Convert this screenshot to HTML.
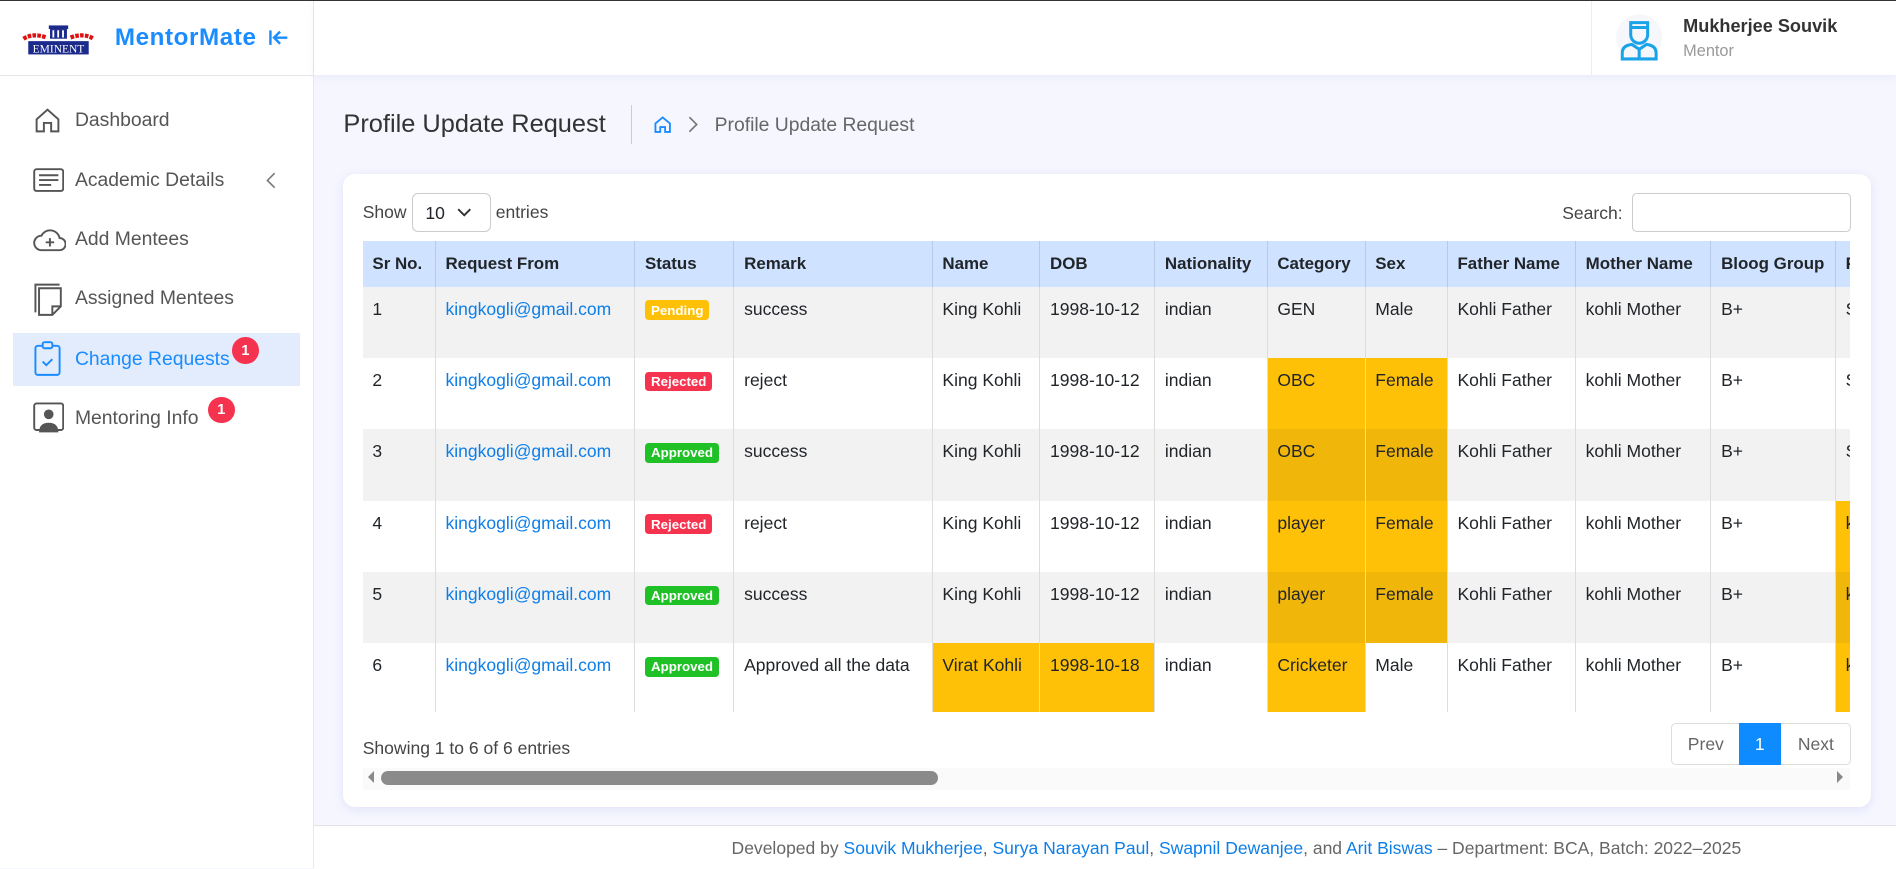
<!DOCTYPE html>
<html><head><meta charset="utf-8"><style>
html,body{margin:0;padding:0}
body{width:1568px;height:718px;zoom:1.20918;overflow:hidden;font-family:"Liberation Sans",sans-serif;background:#f5f6fe;position:relative;color:#212529}
.abs{position:absolute}
#top{left:0;top:0;width:1568px;height:1px;background:#333}
#side{left:0;top:1px;width:259px;height:717px;background:#fff;border-right:1px solid #e8e8f4}
#hdr{left:260px;top:1px;width:1308px;height:61px;background:#fff;box-shadow:0 2px 6px rgba(100,100,200,.08)}
.nav{position:absolute;left:11px;width:237px;height:44px;font-size:16px;color:#555;display:flex;align-items:center}
.nav svg{position:absolute;left:16px}
.nav span{position:absolute;left:51px}
.badge{position:absolute;background:#f5334f;color:#fff;font-size:12px;font-weight:bold;border-radius:50%;width:22px;height:22px;display:flex;align-items:center;justify-content:center}
#card{left:284px;top:144px;width:1263px;height:523px;background:#fff;border-radius:10px;box-shadow:0 2px 8px rgba(120,120,220,.15)}
#tw{left:300px;top:199px;width:1230px;height:390px;overflow:hidden}
table{border-collapse:collapse;table-layout:fixed;width:1338px;font-size:14.5px}
th{background:#cfe2ff;text-align:left;font-weight:bold;height:38px;padding:0 8px;border-right:1px solid #b8cbe6;font-size:14px;white-space:nowrap;overflow:hidden}
td{height:59px;padding:10px 8px 0;vertical-align:top;border-right:1px solid #ddd;white-space:nowrap;overflow:hidden;box-sizing:border-box;color:#212529}
tr.g td{background:#f2f2f2}
td.y{background:#ffc107!important}
tr.g td.y{background:#f0b70a!important}
a{color:#0d7ee8;text-decoration:none}
.st{display:inline-block;color:#fff;font-size:11px;font-weight:bold;padding:2px 5px;border-radius:3px;margin-top:1px}
.p{background:#ffc107}.r{background:#f5334f}.ap{background:#1fc126}
</style></head><body>
<div id="top" class="abs"></div>
<div id="side" class="abs">
 <svg class="abs" style="left:17px;top:18px" width="62" height="30" viewBox="0 0 62 30">
  <rect x="23" y="2" width="16" height="3" fill="#1c2a8c"/><rect x="24" y="5" width="14" height="8" fill="#1c2a8c"/>
  <rect x="26" y="6" width="1.5" height="6" fill="#fff"/><rect x="30" y="6" width="1.5" height="6" fill="#fff"/><rect x="34" y="6" width="1.5" height="6" fill="#fff"/>
  <path d="M2 13 Q10 8 21 12 M41 12 Q52 8 60 13" stroke="#d11" stroke-width="3.5" fill="none" stroke-dasharray="3 1"/>
  <rect x="6" y="15" width="50" height="11" fill="#1c2a8c"/>
  <text x="31" y="24.5" font-size="9.5" fill="#fff" text-anchor="middle" font-family="Liberation Serif">EMINENT</text>
 </svg>
 <div class="abs" style="left:95px;top:19px;font-size:20px;font-weight:bold;color:#1a8cff;letter-spacing:.5px">MentorMate</div>
 <svg class="abs" style="left:222px;top:22px" width="18" height="16" viewBox="0 0 18 16"><path d="M2 2v12M16 8H6M10 3L5 8l5 5" stroke="#1a8cff" stroke-width="2" fill="none"/></svg>
 <div class="abs" style="left:0;top:61px;width:259px;height:1px;background:#e5e5e5"></div>
 <div class="nav" style="top:77px"><svg width="24" height="24" viewBox="0 0 24 24"><path d="M3 11L12 3l9 8v10h-6v-7h-6v7H3z" stroke="#555" stroke-width="1.6" fill="none"/></svg><span>Dashboard</span></div>
 <div class="nav" style="top:126px"><svg width="26" height="20" viewBox="0 0 26 20"><rect x="1" y="1" width="24" height="18" rx="2" stroke="#555" stroke-width="1.6" fill="none"/><path d="M5 6h16M5 10h16M5 14h10" stroke="#555" stroke-width="1.6"/></svg><span>Academic Details</span><svg style="left:208px" width="10" height="14" viewBox="0 0 10 14"><path d="M8 1L2 7l6 6" stroke="#777" fill="none" stroke-width="1.3"/></svg></div>
 <div class="nav" style="top:175px"><svg width="28" height="22" viewBox="0 0 28 22"><path d="M7 20a6 6 0 0 1 0-12 8 8 0 0 1 15 2 5 5 0 0 1 0 10z" stroke="#555" stroke-width="1.6" fill="none"/><path d="M14 10v7M10.5 13.5h7" stroke="#555" stroke-width="1.6"/></svg><span>Add Mentees</span></div>
 <div class="nav" style="top:224px"><svg width="26" height="30" viewBox="0 0 26 30"><path d="M2 26V3h20" stroke="#555" stroke-width="1.6" fill="none"/><path d="M5 28V6h18v15l-7 7z M16 28v-7h7" stroke="#555" stroke-width="1.6" fill="none"/></svg><span>Assigned Mentees</span></div>
 <div class="nav" style="top:274px;background:#e2ecfd;color:#1a8cff"><svg width="24" height="30" viewBox="0 0 24 30"><rect x="2" y="4" width="20" height="24" rx="2" stroke="#1a8cff" stroke-width="1.6" fill="none"/><rect x="8" y="1" width="8" height="5" rx="1.5" stroke="#1a8cff" stroke-width="1.6" fill="#e2ecfd"/><path d="M8 17l3 3 5-5" stroke="#1a8cff" stroke-width="1.6" fill="none"/></svg><span>Change Requests</span></div>
 <div class="badge" style="left:192px;top:278px">1</div>
 <div class="nav" style="top:323px"><svg width="26" height="28" viewBox="0 0 26 28"><rect x="1" y="2" width="24" height="22" rx="2" stroke="#555" stroke-width="1.6" fill="none"/><circle cx="13" cy="11" r="4" fill="#555"/><path d="M5 26q0-8 8-8t8 8z" fill="#555"/></svg><span>Mentoring Info</span></div>
 <div class="badge" style="left:172px;top:327px">1</div>
</div>
<div id="hdr" class="abs">
 <div class="abs" style="left:1056px;top:0;width:1px;height:61px;background:#eee"></div>
 <svg class="abs" style="left:1076px;top:10px" width="40" height="42" viewBox="0 0 40 42"><circle cx="20" cy="20" r="19" fill="#f6f7fb"/><path d="M13 8h14v10a7 7 0 0 1-14 0z M13 12h14" stroke="#1aa3e8" stroke-width="2.5" fill="none"/><path d="M6 38v-5q0-6 8-7l6 4 6-4q8 1 8 7v5z M20 30v8" stroke="#1aa3e8" stroke-width="2.5" fill="none"/></svg>
 <div class="abs" style="left:1132px;top:12px;font-size:15px;font-weight:bold;color:#333">Mukherjee Souvik</div>
 <div class="abs" style="left:1132px;top:34px;font-size:13.5px;color:#999">Mentor</div>
</div>
<div class="abs" style="left:284px;top:91px;font-size:21px;color:#333">Profile Update Request</div>
<div class="abs" style="left:522px;top:87px;width:1px;height:32px;background:#ccc"></div>
<svg class="abs" style="left:540px;top:95px" width="16" height="16" viewBox="0 0 16 16"><path d="M2 7l6-5 6 5v7H10v-4H6v4H2z" stroke="#1a8cff" stroke-width="1.5" fill="none"/></svg>
<svg class="abs" style="left:568px;top:96px" width="10" height="14" viewBox="0 0 10 14"><path d="M2 1l6 6-6 6" stroke="#777" stroke-width="1.4" fill="none"/></svg>
<div class="abs" style="left:591px;top:94px;font-size:16px;color:#666">Profile Update Request</div>
<div id="card" class="abs"></div>
<div class="abs" style="left:300px;top:167px;font-size:14.5px;color:#444">Show</div>
<div class="abs" style="left:341px;top:160px;width:63px;height:30px;border:1px solid #ccc;border-radius:5px;background:#fff"><span class="abs" style="left:10px;top:7px;font-size:14.5px">10</span><svg class="abs" style="left:36px;top:11px" width="12" height="8" viewBox="0 0 12 8"><path d="M1 1l5 5 5-5" stroke="#333" stroke-width="1.6" fill="none"/></svg></div>
<div class="abs" style="left:410px;top:167px;font-size:14.5px;color:#444">entries</div>
<div class="abs" style="left:1292px;top:168px;font-size:14.5px;color:#444">Search:</div>
<div class="abs" style="left:1350px;top:160px;width:179px;height:30px;border:1px solid #ccc;border-radius:4px;background:#fff"></div>
<div id="tw" class="abs"><table>
<colgroup><col style="width:60px"><col style="width:165px"><col style="width:82px"><col style="width:164px"><col style="width:89px"><col style="width:95px"><col style="width:93px"><col style="width:81px"><col style="width:68px"><col style="width:106px"><col style="width:112px"><col style="width:103px"><col style="width:120px"></colgroup>
<tr><th>Sr No.</th><th>Request From</th><th>Status</th><th>Remark</th><th>Name</th><th>DOB</th><th>Nationality</th><th>Category</th><th>Sex</th><th>Father Name</th><th>Mother Name</th><th>Bloog Group</th><th>Phone</th></tr>
<tr class="g"><td>1</td><td><a>kingkogli@gmail.com</a></td><td><span class="st p">Pending</span></td><td>success</td><td>King Kohli</td><td>1998-10-12</td><td>indian</td><td>GEN</td><td>Male</td><td>Kohli Father</td><td>kohli Mother</td><td>B+</td><td>S</td></tr>
<tr><td>2</td><td><a>kingkogli@gmail.com</a></td><td><span class="st r">Rejected</span></td><td>reject</td><td>King Kohli</td><td>1998-10-12</td><td>indian</td><td class="y">OBC</td><td class="y">Female</td><td>Kohli Father</td><td>kohli Mother</td><td>B+</td><td>S</td></tr>
<tr class="g"><td>3</td><td><a>kingkogli@gmail.com</a></td><td><span class="st ap">Approved</span></td><td>success</td><td>King Kohli</td><td>1998-10-12</td><td>indian</td><td class="y">OBC</td><td class="y">Female</td><td>Kohli Father</td><td>kohli Mother</td><td>B+</td><td>S</td></tr>
<tr><td>4</td><td><a>kingkogli@gmail.com</a></td><td><span class="st r">Rejected</span></td><td>reject</td><td>King Kohli</td><td>1998-10-12</td><td>indian</td><td class="y">player</td><td class="y">Female</td><td>Kohli Father</td><td>kohli Mother</td><td>B+</td><td class="y">k</td></tr>
<tr class="g"><td>5</td><td><a>kingkogli@gmail.com</a></td><td><span class="st ap">Approved</span></td><td>success</td><td>King Kohli</td><td>1998-10-12</td><td>indian</td><td class="y">player</td><td class="y">Female</td><td>Kohli Father</td><td>kohli Mother</td><td>B+</td><td class="y">k</td></tr>
<tr><td>6</td><td><a>kingkogli@gmail.com</a></td><td><span class="st ap">Approved</span></td><td>Approved all the data</td><td class="y">Virat Kohli</td><td class="y">1998-10-18</td><td>indian</td><td class="y">Cricketer</td><td>Male</td><td>Kohli Father</td><td>kohli Mother</td><td>B+</td><td class="y">k</td></tr>
</table></div>
<div class="abs" style="left:300px;top:610px;font-size:14.5px;color:#444">Showing 1 to 6 of 6 entries</div>
<div class="abs" style="left:1382px;top:598px;width:147px;height:33px;border:1px solid #ddd;border-radius:4px;background:#fff;font-size:14.5px;color:#666">
 <span class="abs" style="left:13px;top:8px">Prev</span>
 <div class="abs" style="left:55px;top:-1px;width:35px;height:35px;background:#0d8bff;color:#fff;text-align:center;line-height:35px">1</div>
 <span class="abs" style="left:104px;top:8px">Next</span>
</div>
<div class="abs" style="left:300px;top:635px;width:1230px;height:18px;background:#fafafa"></div>
<div class="abs" style="left:304px;top:638px;width:0;height:0;border:5px solid transparent;border-right:5px solid #888;border-left:0"></div>
<div class="abs" style="left:1519px;top:638px;width:0;height:0;border:5px solid transparent;border-left:5px solid #888;border-right:0"></div>
<div class="abs" style="left:315px;top:638px;width:461px;height:11px;background:#8a8a8a;border-radius:6px"></div>
<div class="abs" style="left:260px;top:682px;width:1308px;height:36px;background:#fff;border-top:1px solid #e2e2ea"></div>
<div class="abs" style="left:605px;top:693px;font-size:14.5px;color:#666;white-space:nowrap">Developed by <a>Souvik Mukherjee</a>, <a>Surya Narayan Paul</a>, <a>Swapnil Dewanjee</a>, and <a>Arit Biswas</a> – Department: BCA, Batch: 2022–2025</div>
</body></html>
